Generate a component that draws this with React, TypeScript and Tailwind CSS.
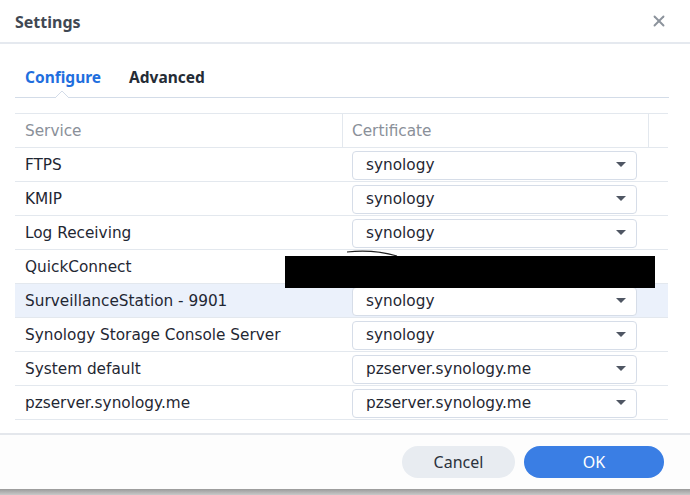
import { X } from "lucide-react";

const rows = [
  { name: "FTPS", cert: "synology" },
  { name: "KMIP", cert: "synology" },
  { name: "Log Receiving", cert: "synology" },
  { name: "QuickConnect", cert: "" },
  { name: "SurveillanceStation - 9901", cert: "synology", active: true },
  { name: "Synology Storage Console Server", cert: "synology" },
  { name: "System default", cert: "pzserver.synology.me" },
  { name: "pzserver.synology.me", cert: "pzserver.synology.me" },
];

function Select({ value }: { value: string }) {
  return (
    <div className="flex items-center justify-between w-[285px] h-[29px] mt-[1px] bg-white border border-[#d6dde8] rounded-[4px] pl-[13px] pr-[10px]">
      <span className="text-[#1f2733] pt-[1px]">{value}</span>
      <svg width="10" height="6" viewBox="0 0 10 6">
        <path d="M0 0H10L5 5Z" fill="#4f5663" />
      </svg>
    </div>
  );
}

export default function App() {
  return (
    <div className="relative w-[690px] h-[495px] bg-white overflow-hidden font-['DejaVu_Sans',sans-serif] text-[15.3px] text-[#1f2733]">
      <div className="flex items-center justify-between h-[44px] pl-[15px] pr-[22px] border-b-2 border-[#e5e9ef]">
        <span className="font-['Noto_Sans',sans-serif] font-bold text-[16px] text-[#414853] pt-[2px]">Settings</span>
        <X size={18} strokeWidth={2.5} className="text-[#8c939c]" />
      </div>

      <div className="mx-[15px] mr-[21px] mt-[20px] relative border-b border-[#d3dce8] h-[34px] flex gap-[28px] pl-[10px] pt-[2px] font-['Noto_Sans',sans-serif] font-bold text-[15.5px]">
        <span className="text-[#1f6fde]">Configure</span>
        <span className="text-[#252c36]">Advanced</span>
        <svg width="14" height="8" viewBox="0 0 14 8" className="absolute left-[40px] bottom-[-1px]">
          <path d="M0 8L7 1L14 8" fill="white" stroke="#d3dce8" strokeWidth="1" />
        </svg>
      </div>

      <div className="mt-[15px] ml-[15px] w-[653px] border-t border-[#e3e8ee]">
        <div className="flex h-[34px] border-b border-[#e3e8ee] text-[#8a9099]">
          <div className="w-[328px] pl-[10px] pt-[2px] flex items-center border-r border-[#e3e8ee]">Service</div>
          <div className="w-[306px] pl-[9px] pt-[2px] flex items-center border-r border-[#e3e8ee]">Certificate</div>
        </div>
        {rows.map((r) => (
          <div
            key={r.name}
            className={`flex h-[34px] items-center border-b border-[#e3e8ee] ${r.active ? "bg-[#ebf1fb]" : ""}`}
          >
            <div className="w-[337px] pl-[10px] pt-[2px]">{r.name}</div>
            {r.cert && <Select value={r.cert} />}
          </div>
        ))}
      </div>

      <div className="absolute left-0 right-0 top-[433px] h-[56px] border-t-2 border-[#e4e7ec] bg-[#fdfdfd] flex items-center justify-end gap-[9px] pr-[26px]">
        <button className="w-[113px] h-[32px] rounded-full bg-[#e8ecf1] text-[#2b323c] font-['Noto_Sans',sans-serif] text-[16px]">Cancel</button>
        <button className="w-[140px] h-[32px] rounded-full bg-[#3a7ee4] text-white font-['Noto_Sans',sans-serif] text-[16px]">OK</button>
      </div>
      <div className="absolute left-0 right-0 bottom-0 h-[6px] bg-gradient-to-b from-[#9a9a9a] to-[#c9c9c9]" />

      <svg className="absolute left-[345px] top-[249px]" width="60" height="10" viewBox="0 0 60 10">
        <path d="M2 3C20 1 35 2 52 7" fill="none" stroke="#222" strokeWidth="1.2" />
      </svg>
      <div className="absolute left-[285px] top-[256px] w-[370px] h-[32px] bg-black" />
    </div>
  );
}
